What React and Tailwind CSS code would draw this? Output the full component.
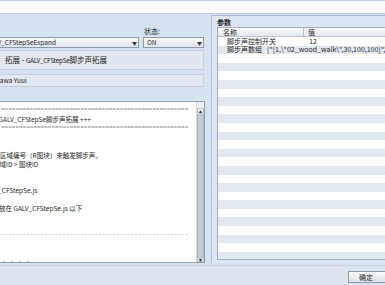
import React from 'react';

const FONT = "font-['Liberation_Sans_Narrow','Noto_Sans_CJK_SC',sans-serif]";
const RULE = "font-['Liberation_Mono',monospace] text-[6px] text-[#8a8a8a] w-[188px] overflow-hidden";

const params = [
  { name: '脚步声控制开关', value: '12' },
  { name: '脚步声数组', value: '["[1,\\"02_wood_walk\\",30,100,100]","[2,\\"03_stone\\"]"]' },
];

const helpLines = [
  { rule: '=' },
  { text: '*** GALV_CFStepSe脚步声拓展 +++', ml: '-ml-[13px]' },
  { rule: '=' },
  { text: '' },
  { text: '' },
  { text: '区域编号（R图块）来触发脚步声。', ml: '-ml-[1px]' },
  { text: '区域ID > 图块ID', ml: '-ml-[8px]' },
  { text: '' },
  { text: '' },
  { text: 'GALV_CFStepSe.js', ml: '-ml-[18px]' },
  { text: '' },
  { text: '放在 GALV_CFStepSe.js 以下', ml: '-ml-[2px]' },
  { text: '' },
  { text: '' },
  { rule: '-' },
  { text: '' },
  { text: '' },
  { text: '· · · ·', ml: 'text-[#9a9a9a]' },
];

function Select({ children, className }) {
  return (
    <div
      className={`h-[11px] flex items-center border border-[#8f9cad] bg-gradient-to-b from-[#f7f9fb] to-[#dfe5ec] overflow-hidden ${className}`}
    >
      <div className="flex-1 min-w-0 whitespace-nowrap overflow-hidden">{children}</div>
      <span className="w-[7px] text-[5px] text-[#333] text-center">▼</span>
    </div>
  );
}

function App() {
  const rows = Array.from({ length: 26 }, (_, i) => params[i] || null);

  return (
    <div
      className={`w-[385px] h-[285px] overflow-hidden bg-[#d6e2f0] flex flex-col text-[7.5px] leading-none text-[#1e1e1e] ${FONT}`}
    >
      {/* window top strip */}
      <div className="h-[14px] shrink-0 bg-[#fafafa] border-t border-[#a9a9a9] border-b border-[#bfcde0]" />

      <div className="flex flex-1 min-h-0">
        {/* Left: plugin info */}
        <div className="w-[205px] shrink-0 flex flex-col pt-[14px]">
          <div className="flex gap-[4px] pr-[1px]">
            <div className="w-[139px] flex flex-col">
              <div className="h-[9px]" />
              <Select className="-ml-[2px] text-[6.5px]">
                <span className="-ml-[13px]">GALV_CFStepSeExpand</span>
              </Select>
            </div>
            <div className="flex-1 flex flex-col">
              <div className="h-[9px] pl-[1px] flex items-start text-[7px]">状态:</div>
              <Select className="text-[6.5px]">
                <span className="pl-[3px]">ON</span>
              </Select>
            </div>
          </div>

          <div className="mt-[2px] h-[20px] mr-[1px] -ml-[2px] border border-[#c2cedc] bg-[#e1e8f1] pl-[6px] pt-[5px] whitespace-nowrap">
            拓展 - <span className="text-[6.5px] tracking-[-0.3px]">GALV_CFStepSe</span>脚步声拓展
          </div>

          <div className="mt-[4px] h-[13px] mr-[1px] -ml-[2px] border border-[#c2cedc] bg-[#e1e8f1] flex items-center whitespace-nowrap text-[6.5px]">
            <span className="-ml-[3px]">Sawa Yuui</span>
          </div>

          {/* help text */}
          <div className="mt-[14px] h-[162px] -ml-[2px] border border-[#8e9fb4] bg-white flex text-[6.5px]">
            <div className="flex-1 min-w-0 overflow-hidden pt-[4px] pl-[2px]">
              {helpLines.map((l, i) =>
                l.rule ? (
                  <div key={i} className={`h-[8.9px] flex items-center whitespace-nowrap ${RULE}`}>
                    {l.rule.repeat(52)}
                  </div>
                ) : (
                  <div key={i} className={`h-[8.9px] flex items-center whitespace-nowrap ${l.ml || ''}`}>
                    {l.text}
                  </div>
                )
              )}
            </div>
            <div className="w-[8px] shrink-0 bg-[#eef1f4] border-l border-[#d4dae2] flex flex-col">
              <div className="h-[7px] mt-[6px] flex items-center justify-center text-[4px] text-[#444] bg-[#f3f5f7] border border-[#b7c0cb]">
                ▲
              </div>
              <div className="flex-1 bg-[#c3cbd5] border-x border-[#aab4c0]" />
              <div className="h-[5px] flex items-center justify-center text-[4px] text-[#444] bg-[#f3f5f7] border border-[#b7c0cb]">
                ▼
              </div>
            </div>
          </div>
        </div>

        {/* Right: parameters group */}
        <div className="ml-[6px] flex-1 min-w-0 mt-[1px] mb-[2px] border-l border-t border-[#aebfd4] bg-[#dde7f3] flex flex-col pl-[5px] pt-[3px] pb-[3px]">
          <div className="h-[8px] font-bold text-[7px] text-[#222]">参数</div>
          <div className="flex-1 min-h-0 border-l border-t border-b border-[#9fb0c5] bg-white flex flex-col overflow-hidden text-[7px]">
            <div className="h-[9px] shrink-0 flex bg-gradient-to-b from-[#fbfcfd] to-[#e1e7ee] border-b border-[#b9c5d3]">
              <div className="w-[86px] border-r border-[#b2bfcf] pl-[5px] flex items-center">名称</div>
              <div className="flex-1 pl-[4px] flex items-center">值</div>
            </div>
            {rows.map((r, i) => (
              <div
                key={i}
                className={`h-[8.6px] shrink-0 flex items-center whitespace-nowrap ${
                  i % 2 === 1 ? 'bg-[#e2e9f1]' : 'bg-white'
                }`}
              >
                <div className="w-[86px] pl-[9px]">{r ? r.name : ''}</div>
                <div className="flex-1 pl-[5px]">{r ? r.value : ''}</div>
              </div>
            ))}
          </div>
        </div>
      </div>

      {/* bottom buttons */}
      <div className="h-[20px] shrink-0 bg-[#dbe4ee] border-t border-[#c8d3e0] flex items-start justify-end pt-[5px]">
        <button className="w-[44px] -mr-[7px] h-[12px] border border-[#8c98a8] bg-gradient-to-b from-[#fbfbfc] to-[#dce1e7] text-[7px] leading-none flex items-center justify-center pr-[8px]">
          确定
        </button>
      </div>
    </div>
  );
}

export default App;
